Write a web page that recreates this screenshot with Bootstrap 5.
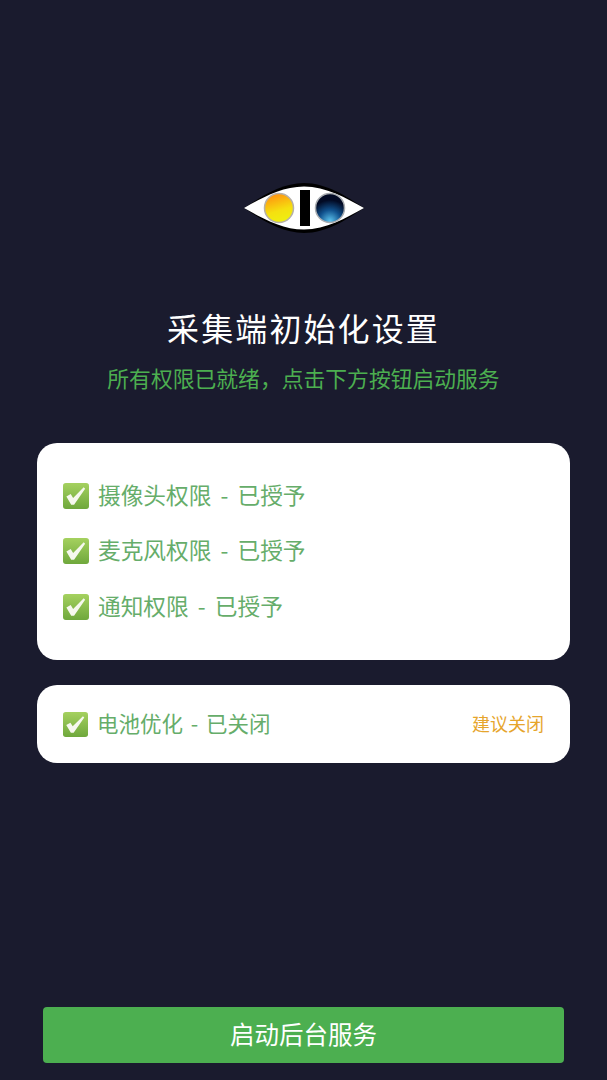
<!DOCTYPE html>
<html lang="zh-CN">
<head>
  <meta charset="UTF-8" />
  <meta name="viewport" content="width=device-width, initial-scale=1.0"/>
  <title>采集端初始化设置</title>
  <link href="https://cdn.jsdelivr.net/npm/bootstrap@5.3.0/dist/css/bootstrap.min.css" rel="stylesheet"/>
  <style>
    html, body { height: 100%; }
    body { background: #1a1b2e; font-family: "Noto Sans CJK SC", "Liberation Sans", sans-serif; }
    .setup-page { height: 1080px; padding: 183px 37px 17px; }
    .logo-wrap { height: 50px; }
    .logo-wrap svg { filter: blur(0.4px); }
    .setup-title { font-size: 32px; line-height: 46px; letter-spacing: 2.1px; color: #fff; margin-top: 71px; font-weight: 400; }
    .setup-sub { font-size: 21.8px; line-height: 32px; color: #4caf50; margin-top: 12px; }
    .perm-panel { background: #fff; border-radius: 20px; border: 0; }
    .perm-list { margin-top: 49px; height: 217px; padding: 25px 26px 0; }
    .perm-battery { margin-top: 25px; height: 78px; padding: 0 26px; }
    .perm-row { height: 55.5px; color: #66ad6a; font-size: 22.7px; word-spacing: 4px; }
    .perm-row-small { color: #66ad6a; font-size: 21.5px; word-spacing: 3px; }
    .perm-text { padding-bottom: 2px; }
    .tick { width: 26px; height: 26px; flex: none; margin-right: 9px; }
    .perm-row-small .tick { width: 25px; height: 25px; }
    .perm-hint { color: #e6a52c; font-size: 18px; padding-bottom: 2px; }
    .start-btn { margin: auto 6px 0; height: 56px; padding: 0 0 2px; background: #4caf50; border: 0; border-radius: 4px; color: #fff; font-size: 24.5px; }
    .start-btn:hover { background: #4caf50; color: #fff; }
  </style>
</head>
<body>
  <svg width="0" height="0" class="position-absolute">
    <defs>
      <linearGradient id="tickFill" x1="0" y1="0" x2="0" y2="1">
        <stop offset="0" stop-color="#a5d15f"/>
        <stop offset="1" stop-color="#6fa83c"/>
      </linearGradient>
      <linearGradient id="warmEye" x1="0.3" y1="0" x2="0.6" y2="1">
        <stop offset="0" stop-color="#ff8f10"/>
        <stop offset="0.6" stop-color="#f5e010"/>
        <stop offset="1" stop-color="#eef010"/>
      </linearGradient>
      <radialGradient id="coldEye" cx="0.5" cy="0.95" r="0.85">
        <stop offset="0" stop-color="#5cc4ee"/>
        <stop offset="0.45" stop-color="#10508c"/>
        <stop offset="0.85" stop-color="#020a24"/>
      </radialGradient>
      <symbol id="tick" viewBox="0 0 27 27">
        <rect width="27" height="27" rx="3" fill="url(#tickFill)"/>
        <path d="M3.500 14 L8 11.500 L10.500 15.500 L21.500 4.500 L23 6 L11.500 22.500 H8.500 Z" fill="#f6f8ee"/>
      </symbol>
    </defs>
  </svg>

  <div class="setup-page d-flex flex-column">
    <div class="logo-wrap d-flex justify-content-center">
      <svg width="120" height="50" viewBox="0 0 120 50">
        <path d="M0 25 C18 13 38 0 60 0 C82 0 102 13 120 25 C102 37 82 50 60 50 C38 50 18 37 0 25 Z" fill="#000"/>
        <path d="M0 25 C18 15 38 3.500 60 3.500 C82 3.500 102 15 120 25 C102 35 82 46.500 60 46.500 C38 46.500 18 35 0 25 Z" fill="#fff"/>
        <circle cx="35" cy="25" r="14.500" fill="url(#warmEye)" stroke="#b5b0a8" stroke-width="1.500"/>
        <rect x="56" y="7" width="10" height="36" fill="#000"/>
        <circle cx="86" cy="25" r="14.500" fill="url(#coldEye)" stroke="#a8acb0" stroke-width="1.500"/>
      </svg>
    </div>

    <h1 class="setup-title text-center mb-0">采集端初始化设置</h1>
    <p class="setup-sub text-center mb-0">所有权限已就绪，点击下方按钮启动服务</p>

    <div class="perm-panel perm-list">
      <div class="perm-row d-flex align-items-center"><svg class="tick"><use href="#tick"/></svg><span class="perm-text">摄像头权限 - 已授予</span></div>
      <div class="perm-row d-flex align-items-center"><svg class="tick"><use href="#tick"/></svg><span class="perm-text">麦克风权限 - 已授予</span></div>
      <div class="perm-row d-flex align-items-center"><svg class="tick"><use href="#tick"/></svg><span class="perm-text">通知权限 - 已授予</span></div>
    </div>

    <div class="perm-panel perm-battery d-flex align-items-center justify-content-between">
      <div class="perm-row-small d-flex align-items-center"><svg class="tick"><use href="#tick"/></svg><span class="perm-text">电池优化 - 已关闭</span></div>
      <span class="perm-hint">建议关闭</span>
    </div>

    <button type="button" class="btn start-btn">启动后台服务</button>
  </div>

  <script src="https://cdn.jsdelivr.net/npm/bootstrap@5.3.0/dist/js/bootstrap.bundle.min.js"></script>
</body>
</html>
